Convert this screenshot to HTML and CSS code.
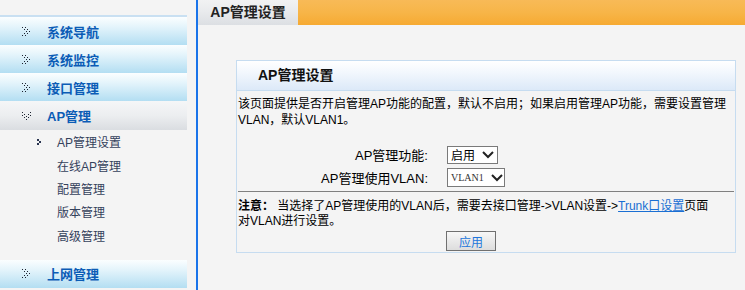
FILE: index.html
```html
<!DOCTYPE html>
<html lang="zh-CN">
<head>
<meta charset="utf-8">
<title>AP管理设置</title>
<link rel="stylesheet" href="styles.css">
</head>
<body>
<div class="layout">
  <aside class="sidebar">
    <ul class="menu">
      <li class="menu-item"><svg class="ico" width="8" height="9" viewBox="0 0 8 9"><g fill="#1d2330"><rect x="0" y="0" width="1" height="1"/><rect x="2" y="2" width="1" height="1"/><rect x="4" y="4" width="1" height="1"/><rect x="2" y="6" width="1" height="1"/><rect x="0" y="8" width="1" height="1"/><rect x="3" y="0" width="1" height="1"/><rect x="5" y="2" width="1" height="1"/><rect x="7" y="4" width="1" height="1"/><rect x="5" y="6" width="1" height="1"/><rect x="3" y="8" width="1" height="1"/></g></svg><span>系统导航</span></li>
      <li class="menu-item"><svg class="ico" width="8" height="9" viewBox="0 0 8 9"><g fill="#1d2330"><rect x="0" y="0" width="1" height="1"/><rect x="2" y="2" width="1" height="1"/><rect x="4" y="4" width="1" height="1"/><rect x="2" y="6" width="1" height="1"/><rect x="0" y="8" width="1" height="1"/><rect x="3" y="0" width="1" height="1"/><rect x="5" y="2" width="1" height="1"/><rect x="7" y="4" width="1" height="1"/><rect x="5" y="6" width="1" height="1"/><rect x="3" y="8" width="1" height="1"/></g></svg><span>系统监控</span></li>
      <li class="menu-item"><svg class="ico" width="8" height="9" viewBox="0 0 8 9"><g fill="#1d2330"><rect x="0" y="0" width="1" height="1"/><rect x="2" y="2" width="1" height="1"/><rect x="4" y="4" width="1" height="1"/><rect x="2" y="6" width="1" height="1"/><rect x="0" y="8" width="1" height="1"/><rect x="3" y="0" width="1" height="1"/><rect x="5" y="2" width="1" height="1"/><rect x="7" y="4" width="1" height="1"/><rect x="5" y="6" width="1" height="1"/><rect x="3" y="8" width="1" height="1"/></g></svg><span>接口管理</span></li>
      <li class="menu-item open"><svg class="ico" width="9" height="8" viewBox="0 0 9 8"><g fill="#1d2330"><rect x="0" y="0" width="1" height="1"/><rect x="2" y="2" width="1" height="1"/><rect x="4" y="4" width="1" height="1"/><rect x="6" y="2" width="1" height="1"/><rect x="8" y="0" width="1" height="1"/><rect x="0" y="3" width="1" height="1"/><rect x="2" y="5" width="1" height="1"/><rect x="4" y="7" width="1" height="1"/><rect x="6" y="5" width="1" height="1"/><rect x="8" y="3" width="1" height="1"/></g></svg><span>AP管理</span></li>
    </ul>
    <ul class="submenu">
      <li class="sub-item active"><svg class="sub-ico" width="6" height="6" viewBox="0 0 6 6"><g fill="#2a3550"><rect x="0" y="0" width="2" height="2"/><rect x="2" y="2" width="2" height="2"/><rect x="0" y="4" width="2" height="2"/></g></svg><span>AP管理设置</span></li>
      <li class="sub-item"><span>在线AP管理</span></li>
      <li class="sub-item"><span>配置管理</span></li>
      <li class="sub-item"><span>版本管理</span></li>
      <li class="sub-item"><span>高级管理</span></li>
    </ul>
    <ul class="menu">
      <li class="menu-item"><svg class="ico" width="8" height="9" viewBox="0 0 8 9"><g fill="#1d2330"><rect x="0" y="0" width="1" height="1"/><rect x="2" y="2" width="1" height="1"/><rect x="4" y="4" width="1" height="1"/><rect x="2" y="6" width="1" height="1"/><rect x="0" y="8" width="1" height="1"/><rect x="3" y="0" width="1" height="1"/><rect x="5" y="2" width="1" height="1"/><rect x="7" y="4" width="1" height="1"/><rect x="5" y="6" width="1" height="1"/><rect x="3" y="8" width="1" height="1"/></g></svg><span>上网管理</span></li>
    </ul>
  </aside>
  <main class="main">
    <div class="tabbar">
      <div class="tab">AP管理设置</div>
      <div class="tab-fill"></div>
    </div>
    <section class="panel">
      <h2 class="panel-title">AP管理设置</h2>
      <div class="panel-body">
        <p class="desc">该页面提供是否开启管理AP功能的配置，默认不启用；如果启用管理AP功能，需要设置管理VLAN，默认VLAN1。</p>
        <div class="form">
          <label class="label">AP管理功能:</label>
          <div class="select s1"><span>启用</span><svg width="12" height="8" viewBox="0 0 12 8"><path d="M1 1 L6 6 L11 1" fill="none" stroke="#222" stroke-width="2"/></svg></div>
          <label class="label">AP管理使用VLAN:</label>
          <div class="select s2"><span class="serif">VLAN1</span><svg width="12" height="8" viewBox="0 0 12 8"><path d="M1 1 L6 6 L11 1" fill="none" stroke="#222" stroke-width="2"/></svg></div>
        </div>
        <div class="rule"></div>
        <p class="note"><b>注意：</b> 当选择了AP管理使用的VLAN后，需要去接口管理-&gt;VLAN设置-&gt;<a href="#">Trunk口设置</a>页面<br>对VLAN进行设置。</p>
        <div class="actions"><button class="btn" type="button">应用</button></div>
      </div>
    </section>
  </main>
</div>
</body>
</html>
```
FILE: styles.css
```css
html, body {
  margin: 0;
  padding: 0;
}
body {
  width: 745px;
  height: 290px;
  overflow: hidden;
  background: #f4f4f4;
  font-family: "Liberation Sans", "Noto Sans CJK SC", sans-serif;
  font-size: 12px;
  color: #000;
}
.layout {
  display: flex;
  height: 290px;
}
.sidebar {
  width: 196px;
  flex: none;
  padding-top: 15px;
}
ul {
  list-style: none;
  margin: 0;
  padding: 0;
}
.menu {
  width: 187px;
}
.menu:first-child {
  border-top: 2px solid #c9e0f2;
}
.menu-item {
  height: 28px;
  display: flex;
  align-items: center;
  background: linear-gradient(#fbfeff 0%, #e4f4fb 35%, #b3def2 100%);
  color: #0b5cb6;
  font-weight: bold;
  font-size: 13px;
}
.menu-item .ico {
  margin-left: 22px;
  margin-right: 17px;
  flex: none;
}
.menu-item.open {
  height: 29px;
  background: linear-gradient(#f5f6f7 0%, #eceef0 50%, #dadde1 100%);
}
.menu-item.open span {
  margin-left: -1px;
}
.submenu {
  padding: 0 0 13px;
}
.sub-item {
  height: 23.4px;
  display: flex;
  align-items: center;
  padding-left: 57px;
  color: #34425c;
  font-size: 12px;
}
.sub-item.active {
  padding-left: 37px;
}
.sub-item .sub-ico {
  margin-right: 14px;
  flex: none;
}
.main {
  flex: 1;
  border-left: 2px solid #1a74ea;
}
.tabbar {
  display: flex;
  height: 25px;
}
.tab {
  width: 100px;
  line-height: 25px;
  text-align: center;
  font-weight: bold;
  font-size: 14px;
  color: #222;
  background: linear-gradient(#f1f2f3 0%, #e9ebed 45%, #dcdfe3 100%);
}
.tab-fill {
  flex: 1;
  background: linear-gradient(#f8ba57 0%, #f7b548 50%, #f6aa32 100%);
}
.panel {
  margin: 35px 9px 0 38px;
  border: 1px solid #c6dcf0;
}
.panel-title {
  margin: 0;
  height: 29px;
  line-height: 29px;
  padding-left: 21px;
  font-size: 14px;
  font-weight: bold;
  color: #111;
  background: linear-gradient(#ffffff 0%, #f2f7fd 40%, #dce9f8 100%);
  border-bottom: 1px solid #c6dcf0;
}
.panel-body {
  padding: 5px 1px 1px 1px;
}
.desc {
  margin: 0 0 15px;
  line-height: 16px;
}
.form {
  display: grid;
  grid-template-columns: 190px auto;
  column-gap: 19px;
  grid-auto-rows: 23px;
  align-items: center;
  justify-items: start;
}
.label {
  justify-self: end;
  font-size: 13px;
}
.select {
  box-sizing: border-box;
  height: 18px;
  border: 1px solid #7a7a7a;
  background: #fff;
  display: flex;
  align-items: center;
  padding-left: 3px;
  gap: 7px;
  font-size: 12px;
  overflow: hidden;
}
.select svg {
  flex: none;
}
.s1 {
  width: 51px;
}
.s2 {
  width: 58px;
  height: 19px;
  gap: 7px;
}
.serif {
  font-family: "Liberation Serif", serif;
  font-size: 10px;
  color: #333;
  white-space: nowrap;
}
.rule {
  margin-top: 2px;
  height: 1px;
  background: #808080;
}
.note {
  margin: 7px 0 2px;
  line-height: 15px;
  font-size: 12px;
}
.note a {
  color: #1a6fd3;
  text-decoration: underline;
}
.actions {
  padding-left: 208px;
}
.btn {
  width: 50px;
  height: 20px;
  padding: 0;
  border: 1px solid #707070;
  background: linear-gradient(#f7f7f7, #dddddd);
  color: #2176dc;
  font-family: "Liberation Sans", "Noto Sans CJK SC", sans-serif;
  font-size: 12px;
  display: block;
}
```
